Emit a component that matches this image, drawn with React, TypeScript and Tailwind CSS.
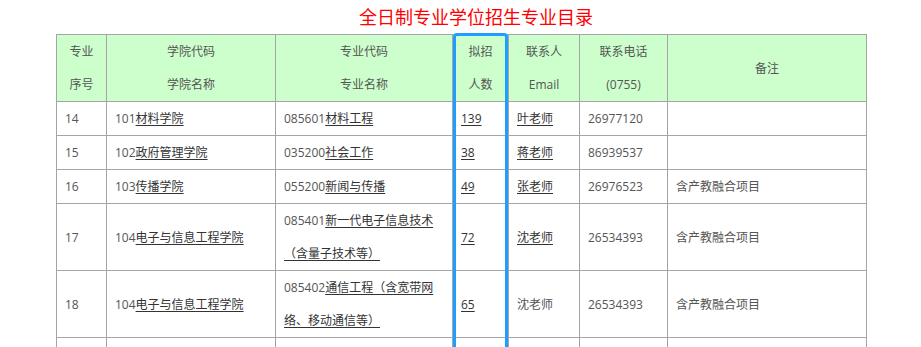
import React from 'react';

const font = { fontFamily: '"Open Sans", "Noto Sans CJK SC", sans-serif' };

type Row = {
    no: string;
    collegeCode: string;
    college: string;
    majorCode: string;
    major: React.ReactNode;
    quota: string;
    contact: string;
    contactLink: boolean;
    phone: string;
    note: string;
};

const rows: Row[] = [
    { no: '14', collegeCode: '101', college: '材料学院', majorCode: '085601', major: '材料工程', quota: '139', contact: '叶老师', contactLink: true, phone: '26977120', note: '' },
    { no: '15', collegeCode: '102', college: '政府管理学院', majorCode: '035200', major: '社会工作', quota: '38', contact: '蒋老师', contactLink: true, phone: '86939537', note: '' },
    { no: '16', collegeCode: '103', college: '传播学院', majorCode: '055200', major: '新闻与传播', quota: '49', contact: '张老师', contactLink: true, phone: '26976523', note: '含产教融合项目' },
    {
        no: '17', collegeCode: '104', college: '电子与信息工程学院', majorCode: '085401',
        major: (<>新一代电子信息技术<br />（含量子技术等）</>),
        quota: '72', contact: '沈老师', contactLink: true, phone: '26534393', note: '含产教融合项目',
    },
    {
        no: '18', collegeCode: '104', college: '电子与信息工程学院', majorCode: '085402',
        major: (<>通信工程（含宽带网<br />络、移动通信等）</>),
        quota: '65', contact: '沈老师', contactLink: false, phone: '26534393', note: '含产教融合项目',
    },
];

const td = 'border border-[#a5a5a5] px-2 py-0 align-middle';
const th = 'border border-[#a5a5a5] px-2 py-0 font-normal text-center align-middle';
const link = 'text-[#333] underline underline-offset-2';

const App = () => {
    return (
        <div className="h-[347px] overflow-hidden bg-white text-[12px] leading-[33px] text-[#555]" style={font}>
            {/* Title */}
            <h2 className="h-[34px] pl-[31px] text-center text-[18px] font-normal leading-[34px] text-[#ff0000]">
                全日制专业学位招生专业目录
            </h2>

            {/* Table */}
            <div className="relative ml-[56px] w-[811px]">
                <table className="w-[811px] table-fixed border-collapse">
                    <colgroup>
                        <col className="w-[50px]" />
                        <col className="w-[169px]" />
                        <col className="w-[177px]" />
                        <col className="w-[56px]" />
                        <col className="w-[71px]" />
                        <col className="w-[88px]" />
                        <col className="w-[199px]" />
                    </colgroup>
                    <thead className="bg-[#ccffcc]">
                        <tr>
                            <th className={th}>专业<br />序号</th>
                            <th className={th}>学院代码<br />学院名称</th>
                            <th className={th}>专业代码<br />专业名称</th>
                            <th className={th}>拟招<br />人数</th>
                            <th className={th}>联系人<br />Email</th>
                            <th className={th}>联系电话<br />(0755)</th>
                            <th className={th}>备注</th>
                        </tr>
                    </thead>
                    <tbody>
                        {rows.map((r) => (
                            <tr key={r.no}>
                                <td className={td}>{r.no}</td>
                                <td className={td}>{r.collegeCode}<span className={link}>{r.college}</span></td>
                                <td className={td}>{r.majorCode}<span className={link}>{r.major}</span></td>
                                <td className={td}><span className={link}>{r.quota}</span></td>
                                <td className={td}>
                                    {r.contactLink ? <span className={link}>{r.contact}</span> : r.contact}
                                </td>
                                <td className={td}>{r.phone}</td>
                                <td className={td}>{r.note}</td>
                            </tr>
                        ))}
                        {/* next row, only its top shows */}
                        <tr className="h-[34px]">
                            <td className={td} />
                            <td className={td} />
                            <td className={td} />
                            <td className={td} />
                            <td className={td} />
                            <td className={td} />
                            <td className={td} />
                        </tr>
                    </tbody>
                </table>

                {/* highlight around 拟招人数 column */}
                <div className="pointer-events-none absolute left-[397px] top-[-1px] h-[400px] w-[55px] rounded-[4px] border-[3px] border-[#1e9fff]" />
            </div>
        </div>
    );
};

export default App;
